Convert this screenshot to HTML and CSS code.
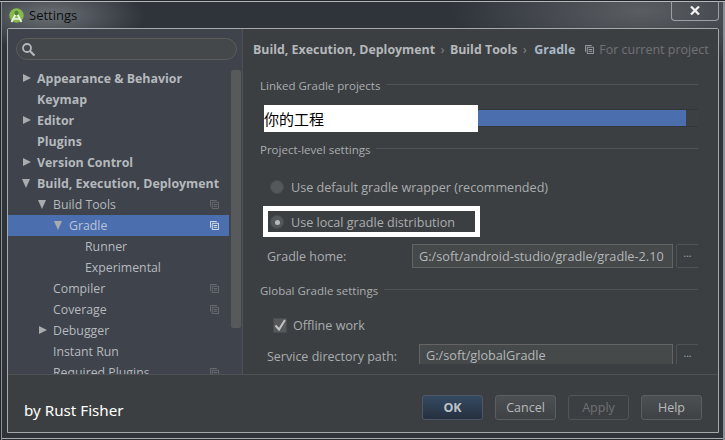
FILE: index.html
```html
<!DOCTYPE html>
<html lang="en">
  <head>
    <meta charset="UTF-8" />
    <title>Settings</title>
    <link rel="stylesheet" href="styles.css">
  </head>
  <body>
    <div class="window">
      <div class="titlebar">
        <svg class="app-icon" width="15" height="15" viewBox="0 0 15 15">
          <circle cx="7.5" cy="7.5" r="7.2" fill="#86bb4c" />
          <path d="M2.5 14 L6.5 6.5 M12.5 14 L8.5 6.5 M5 11 H10.5" stroke="#f0f3ea" stroke-width="1.7" fill="none" />
          <circle cx="7.5" cy="5" r="2.2" fill="#55803a" />
        </svg>
        <span class="title">Settings</span>
        <div class="close-btn">
          <svg width="10" height="9" viewBox="0 0 10 9">
            <path d="M1 .5 L9 8.5 M9 .5 L1 8.5" stroke="#f2f2f2" stroke-width="2.2" fill="none" />
          </svg>
        </div>
      </div>
      <div class="client">
        <div class="content">
          <!-- left tree -->
          <div class="sidebar">
            <div class="search">
              <svg width="15" height="15" viewBox="0 0 15 15">
                <circle cx="6" cy="6" r="4" stroke="#b4b8bc" stroke-width="1.8" fill="none" />
                <path d="M9 9 L13.5 13.5" stroke="#b4b8bc" stroke-width="2.2" />
              </svg>
            </div>
            <div class="tree-wrap">
              <div class="tree">
                <div class="row bold"><i class="arrow right"></i>Appearance &amp; Behavior</div>
                <div class="row bold"><i class="arrow"></i>Keymap</div>
                <div class="row bold"><i class="arrow right"></i>Editor</div>
                <div class="row bold"><i class="arrow"></i>Plugins</div>
                <div class="row bold"><i class="arrow right"></i>Version Control</div>
                <div class="row bold"><i class="arrow down"></i>Build, Execution, Deployment</div>
                <div class="row lvl1"><i class="arrow down"></i>Build Tools<svg class="copy"><use href="#copy-icon" /></svg></div>
                <div class="row lvl2 selected"><i class="arrow down"></i>Gradle<svg class="copy"><use href="#copy-icon" /></svg></div>
                <div class="row lvl3"><i class="arrow"></i>Runner</div>
                <div class="row lvl3"><i class="arrow"></i>Experimental</div>
                <div class="row lvl1"><i class="arrow"></i>Compiler<svg class="copy"><use href="#copy-icon" /></svg></div>
                <div class="row lvl1"><i class="arrow"></i>Coverage<svg class="copy"><use href="#copy-icon" /></svg></div>
                <div class="row lvl1"><i class="arrow right"></i>Debugger</div>
                <div class="row lvl1"><i class="arrow"></i>Instant Run</div>
                <div class="row lvl1"><i class="arrow"></i>Required Plugins<svg class="copy"><use href="#copy-icon" /></svg></div>
              </div>
              <div class="scrollbar"></div>
            </div>
          </div>
          <!-- right panel -->
          <div class="panel">
            <div class="crumbs">
              <b>Build, Execution, Deployment</b><span class="sep">›</span><b>Build Tools</b><span class="sep">›</span><b class="last">Gradle</b>
              <svg class="copy crumb-copy"><use href="#copy-icon" /></svg>
              <span class="scope">For current project</span>
            </div>
            <div class="panel-body">
              <div class="group linked"><span>Linked Gradle projects</span></div>
              <div class="project-list">
                <div class="project-bar"></div>
                <div class="mask project-name">你的工程</div>
              </div>
              <div class="group level"><span>Project-level settings</span></div>
              <div class="radio-row first"><i class="radio"></i>Use default gradle wrapper (recommended)</div>
              <div class="radio-row second"><i class="radio on"></i>Use local gradle distribution<div class="highlight"></div></div>
              <div class="field-row home">
                <label class="field-label">Gradle home:</label>
                <div class="field">G:/soft/android-studio/gradle/gradle-2.10</div>
                <div class="browse">...</div>
              </div>
              <div class="group global"><span>Global Gradle settings</span></div>
              <div class="check-row">
                <i class="check">
                  <svg width="14" height="15" viewBox="0 0 14 15">
                    <path d="M2.5 7.5 L6 11.5 L12 2" stroke="#c2c3c3" stroke-width="2" fill="none" />
                  </svg>
                </i>Offline work
              </div>
              <div class="field-row service">
                <label class="field-label">Service directory path:</label>
                <div class="field">G:/soft/globalGradle</div>
                <div class="browse">...</div>
              </div>
            </div>
          </div>
        </div>
        <div class="footer">
          <span class="credit">by Rust Fisher</span>
          <div class="buttons">
            <button class="btn primary">OK</button>
            <button class="btn">Cancel</button>
            <button class="btn disabled">Apply</button>
            <button class="btn">Help</button>
          </div>
        </div>
      </div>
    </div>
    <svg width="0" height="0" class="defs">
      <symbol id="copy-icon" viewBox="0 0 10 10">
        <path d="M0.5 7.5 V0.5 H7.5" fill="none" stroke="currentColor" />
        <path d="M2.5 2.5 H9.5 V9.5 H2.5 Z M4 5 H8 M4 7 H8" fill="none" stroke="currentColor" />
      </symbol>
    </svg>
  </body>
</html>
```

FILE: styles.css
```css
/* page */
body {
  margin: 0;
  padding: 0;
  background-color: #23272c;
  font-family: "Open Sans", "Noto Sans", sans-serif;
  font-size: 12.6px;
  color: #b9bcbe;
}
.defs {
  position: absolute;
}

/* window frame */
.window {
  box-sizing: border-box;
  width: 725px;
  height: 440px;
  display: flex;
  flex-direction: column;
  overflow: hidden;
  padding: 0 6px 7px 7px;
  border-top: 1px solid #23272c;
  box-shadow: inset 0 1px 0 #b4b8ba, inset 1px 0 0 #23272c, inset 2px 0 0 #8a8f96, inset -2px 0 0 #8a8f96, inset 0 -1px 0 #2b2f34, inset 0 -2px 0 #a9adaf;
  background:
    radial-gradient(ellipse 95px 34px at 50px 14px, #6a7074 0%, rgba(106, 112, 116, 0) 100%),
    radial-gradient(ellipse 190px 60px at 640px 10px, #5a5e63 0%, rgba(90, 94, 99, 0) 100%),
    #2f343b;
}
.titlebar {
  height: 27px;
  display: flex;
  align-items: center;
  flex-shrink: 0;
  padding-left: 2px;
  position: relative;
}
.app-icon {
  margin-right: 5px;
  margin-top: 1px;
}
.title {
  color: #0c0e10;
  font-size: 13px;
  margin-top: 1px;
}
.close-btn {
  position: absolute;
  right: 0;
  top: 0;
  box-sizing: border-box;
  width: 48px;
  height: 20px;
  border: 1px solid #9ca0a4;
  border-top: none;
  border-radius: 0 0 4px 4px;
  display: flex;
  align-items: center;
  justify-content: center;
}

/* client area */
.client {
  flex: 1;
  display: flex;
  flex-direction: column;
  min-height: 0;
  border: 1px solid #a5a9ab;
  border-radius: 2px 2px 0 0;
  background-color: #3c3f41;
}
.content {
  height: 345px;
  display: flex;
  border-bottom: 1px solid #4f5254;
  flex-shrink: 0;
}

/* sidebar */
.sidebar {
  width: 234px;
  flex-shrink: 0;
  background-color: #3e434c;
  border-right: 1px solid #4f5254;
  overflow: hidden;
  display: flex;
  flex-direction: column;
}
.search {
  box-sizing: border-box;
  height: 22px;
  margin: 9px 5px 8px 8px;
  border: 1px solid #5a5d5c;
  border-radius: 11px;
  background-color: #45484a;
  display: flex;
  align-items: center;
  padding-left: 4px;
  flex-shrink: 0;
}
.tree-wrap {
  display: flex;
  flex: 1;
  min-height: 0;
}
.tree {
  width: 221px;
  flex-shrink: 0;
}
.scrollbar {
  width: 10px;
  height: 258px;
  margin: 2px 0 0 2px;
  background-color: #57595b;
  border-radius: 2px;
}
.row {
  height: 21px;
  line-height: 21px;
  display: flex;
  align-items: center;
  white-space: nowrap;
  padding-left: 14px;
  font-size: 12.3px;
  color: #b6babd;
}
.row.bold {
  font-weight: 700;
  font-size: 12.4px;
  color: #b5b9bc;
}
.row.lvl1 {
  padding-left: 30px;
}
.row.lvl2 {
  padding-left: 46px;
}
.row.lvl3 {
  padding-left: 62px;
}
.row.selected {
  background-color: #4b6eaf;
  color: #b9c3d6;
}
.arrow {
  width: 15px;
  flex-shrink: 0;
  height: 9px;
  display: block;
  position: relative;
}
.arrow.right::before {
  content: "";
  position: absolute;
  left: 1px;
  top: 0;
  border-left: 8px solid #a9abad;
  border-top: 4.5px solid transparent;
  border-bottom: 4.5px solid transparent;
}
.arrow.down::before {
  content: "";
  position: absolute;
  left: 0;
  top: 0;
  border-top: 9px solid #a9abad;
  border-left: 4.5px solid transparent;
  border-right: 4.5px solid transparent;
}
.copy {
  width: 9px;
  height: 9px;
  margin-left: auto;
  margin-right: 10px;
  color: #6d7074;
  flex-shrink: 0;
}
.selected .copy {
  color: #e6e9ef;
}

/* right panel */
.panel {
  flex: 1;
  min-width: 0;
  overflow: hidden;
  padding: 0 20px 10px 17px;
  background-color: #3c3f41;
  display: flex;
  flex-direction: column;
}
.crumbs {
  display: flex;
  align-items: center;
  height: 40px;
  flex-shrink: 0;
  white-space: nowrap;
  margin-left: -7px;
  margin-right: -20px;
  font-size: 12.4px;
  color: #b5b9bc;
}
.crumbs .sep {
  margin: 0 5.5px;
  color: #8a8c8e;
}
.crumbs .last {
  margin-left: 2px;
  color: #a9b7c6;
}
.crumb-copy {
  margin: 0 5px 0 10px;
  color: #a0a8b0;
}
.scope {
  font-size: 12.5px;
  color: #707275;
}
.panel-body {
  flex: 1;
  min-height: 0;
  overflow: hidden;
}
.group {
  display: flex;
  align-items: center;
  white-space: nowrap;
  color: #a9adb0;
  font-size: 11.5px;
  height: 17px;
}
.group::after {
  content: "";
  flex: 1;
  height: 1px;
  background-color: #505254;
  margin-left: 6px;
  margin-top: -3px;
}
.linked {
  margin-top: 8px;
}
.project-list {
  position: relative;
  height: 16px;
  margin: 15px -1px 0 4px;
  border: 1px solid #333638;
  background-color: #3d4042;
}
.project-bar {
  height: 100%;
  margin-right: 12px;
  background-color: #4b6eaf;
}
.mask {
  position: absolute;
  background-color: #fff;
}
.project-name {
  left: -1px;
  top: -5px;
  width: 214px;
  height: 27px;
  line-height: 27px;
  color: #000;
  font-size: 15px;
  font-family: "Noto Sans CJK SC", sans-serif;
}
.level {
  margin-top: 14px;
}
.radio-row {
  display: flex;
  align-items: center;
  position: relative;
  height: 20px;
  padding-left: 10px;
  white-space: nowrap;
  color: #a9adb0;
}
.radio-row.first {
  margin-top: 19px;
}
.radio-row.second {
  margin-top: 15px;
}
.radio {
  box-sizing: border-box;
  width: 14px;
  height: 14px;
  margin-right: 7px;
  border-radius: 50%;
  background-color: #55585a;
  border: 1px solid #4a4d4f;
  display: flex;
  align-items: center;
  justify-content: center;
}
.radio.on::before {
  content: "";
  width: 5px;
  height: 5px;
  border-radius: 50%;
  background-color: #b8babc;
}
.highlight {
  position: absolute;
  box-sizing: border-box;
  left: 3px;
  top: -6px;
  width: 217px;
  height: 31px;
  border: 5px solid #fff;
}
.field-row {
  display: flex;
  align-items: center;
  padding-left: 7px;
  margin-right: -1px;
  white-space: nowrap;
  color: #a9adb0;
}
.field-row.home {
  height: 24px;
  margin-top: 12px;
}
.field-label {
  flex: 1;
  font-size: 12.5px;
}
.field {
  box-sizing: border-box;
  height: 24px;
  line-height: 22px;
  border: 1px solid #646464;
  background-color: #45494a;
  padding-left: 6px;
  font-size: 12.7px;
  color: #b4b7b9;
  width: 261px;
  flex-shrink: 0;
}
.service .field {
  width: 254px;
  line-height: 21px;
}
.browse {
  box-sizing: border-box;
  width: 23px;
  height: 24px;
  margin-left: 3px;
  border: 1px solid #505254;
  border-radius: 2px;
  text-align: center;
  line-height: 17px;
  font-size: 10px;
  flex-shrink: 0;
}
.global {
  margin-top: 14px;
}
.check-row {
  display: flex;
  align-items: center;
  height: 20px;
  margin-top: 16px;
  padding-left: 13px;
  white-space: nowrap;
  color: #a9adb0;
}
.check {
  box-sizing: border-box;
  width: 14px;
  height: 15px;
  margin-right: 6px;
  background-color: #565859;
  border: 1px solid #4a4d4f;
  display: block;
  line-height: 0;
}
.check svg {
  margin: -1px;
}
.field-row.service {
  height: 24px;
  margin-top: 9px;
}

/* footer */
.footer {
  flex: 1;
  display: flex;
  align-items: center;
  justify-content: space-between;
  padding: 0 16px;
  background-color: #3c3f41;
}
.credit {
  color: #fff;
  font-size: 15.2px;
  margin-top: 13px;
  font-family: "Noto Sans", sans-serif;
}
.buttons {
  display: flex;
  gap: 12px;
  margin-top: 7px;
}
.btn {
  box-sizing: border-box;
  width: 61px;
  height: 25px;
  padding: 0;
  font-family: inherit;
  font-size: 12.5px;
  color: #b6babd;
  border: 1px solid #5b5e60;
  border-radius: 3px;
  background: linear-gradient(#4d5052, #3f4244);
}
.btn.primary {
  font-weight: 700;
  color: #bcc3c8;
  border-color: #4c5866;
  background: linear-gradient(#344a61, #26303f);
}
.btn.disabled {
  color: #6f7173;
  border-color: #525456;
  background: none;
}
```
